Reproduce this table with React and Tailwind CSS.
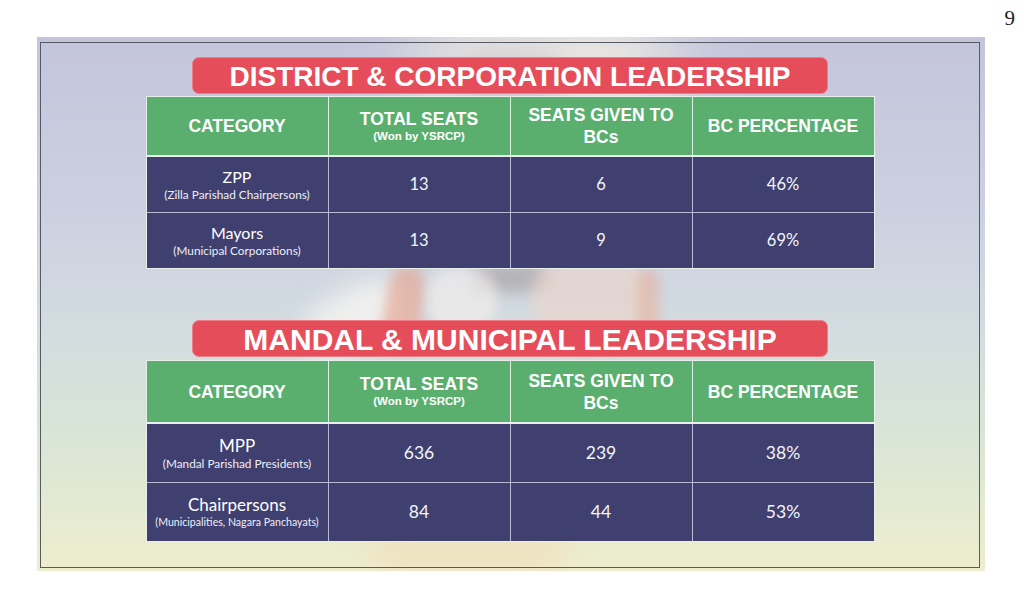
// Slide 9: BC leadership tables

const font = { fontFamily: '"Liberation Sans", Arial, sans-serif' };
const bodyFont = { fontFamily: 'Lato, "Open Sans", sans-serif' };

const headers = [
  { title: "CATEGORY" },
  { title: "TOTAL SEATS", sub: "(Won by YSRCP)" },
  { title: "SEATS GIVEN TO BCs", wrap: true },
  { title: "BC PERCENTAGE" },
];

const district = [
  { name: "ZPP", note: "(Zilla Parishad Chairpersons)", total: "13", bc: "6", pct: "46%" },
  { name: "Mayors", note: "(Municipal Corporations)", total: "13", bc: "9", pct: "69%" },
];

const mandal = [
  { name: "MPP", note: "(Mandal Parishad Presidents)", total: "636", bc: "239", pct: "38%" },
  {
    name: "Chairpersons",
    note: "(Municipalities, Nagara Panchayats)",
    small: true,
    total: "84",
    bc: "44",
    pct: "53%",
  },
];

const Banner = ({ children, className, size }) => (
  <div
    className={`w-[636px] h-[37px] rounded-[7px] bg-[#e54d5b] border border-[#f07c86] flex items-center justify-center ${className}`}
  >
    <span className={`text-white font-bold ${size} leading-none pt-[2px]`} style={font}>
      {children}
    </span>
  </div>
);

const DataTable = ({ rows, headH, rowH, big }) => (
  <div className="w-[729px] bg-[#e9f0ec] p-px flex flex-col gap-[2px]">
    <div className="grid grid-cols-4 gap-px bg-[#dcefe0]">
      {headers.map((h) => (
        <div
          key={h.title}
          className={`bg-[#5aaf6e] ${headH} flex flex-col items-center justify-center text-white font-bold text-center`}
          style={font}
        >
          {h.wrap ? (
            <span className="text-[17.5px] leading-[22px]">
              SEATS GIVEN TO
              <br />
              BCs
            </span>
          ) : (
            <span className="text-[17.5px] leading-[20px]">{h.title}</span>
          )}
          {h.sub && <span className="text-[11.5px] leading-[15px]">{h.sub}</span>}
        </div>
      ))}
    </div>
    <div className="grid grid-cols-4 gap-px bg-[#b9bad3]">
      {rows.map((r) => (
        <div key={r.name} className="contents">
          <div
            className={`bg-[#3f406f] ${rowH} flex flex-col items-center justify-center text-white`}
            style={bodyFont}
          >
            <span className={`${big ? "text-[17px]" : "text-[16px]"} leading-[20px]`}>
              {r.name}
            </span>
            <span
              className={`${r.small ? "text-[10.6px]" : "text-[11.8px]"} leading-[15px] text-[#eeeef6]`}
            >
              {r.note}
            </span>
          </div>
          {[r.total, r.bc, r.pct].map((v, i) => (
            <div
              key={i}
              className={`bg-[#3f406f] ${rowH} flex items-center justify-center text-[#f4f4fa] ${
                big ? "text-[17.5px]" : "text-[16.5px]"
              }`}
              style={bodyFont}
            >
              {v}
            </div>
          ))}
        </div>
      ))}
    </div>
  </div>
);

const App = () => {
  return (
    <div className="w-[1024px] h-[612px] bg-white overflow-hidden">
      {/* Page number */}
      <div className="h-[37px] flex justify-end pr-[9px] pt-[3px]">
        <span className="text-[21px] text-[#222]" style={{ fontFamily: '"Liberation Serif", serif' }}>
          9
        </span>
      </div>

      {/* Slide */}
      <div className="ml-[37px] w-[948px] h-[534px] pt-[5px] pl-[3px] pr-[5px] pb-[3px] relative overflow-hidden bg-[linear-gradient(180deg,#c4c5dc_0%,#cbcfe0_30%,#d3dce0_55%,#d9e5d6_75%,#eeeece_100%)]">
        {/* faded photo backdrop */}
        <div className="absolute left-[380px] top-[-30px] w-[260px] h-[120px] rounded-full bg-[#fffbe6] opacity-70 blur-2xl" />
        <div className="absolute left-[420px] top-[15px] w-[110px] h-[60px] rounded-full bg-[#a9a4b4] opacity-40 blur-lg" />
        <div className="absolute left-[262px] top-[252px] w-[110px] h-[60px] rounded-[40%] bg-[#fbf8f4] opacity-70 blur-md rotate-[-30deg]" />
        <div className="absolute left-[348px] top-[228px] w-[38px] h-[85px] rounded-[40%] bg-[#e8a08a] opacity-60 blur-[6px] rotate-[8deg]" />
        <div className="absolute left-[435px] top-[226px] w-[80px] h-[30px] rounded-full bg-[#8f807e] opacity-40 blur-[7px]" />
        <div className="absolute left-[390px] top-[232px] w-[70px] h-[60px] rounded-[40%] bg-[#f7f1ee] opacity-60 blur-[6px]" />
        <div className="absolute left-[495px] top-[210px] w-[115px] h-[105px] rounded-[45%] bg-[#ead6cd] opacity-70 blur-[7px] rotate-[-15deg]" />
        <div className="absolute left-[600px] top-[232px] w-[22px] h-[75px] rounded-full bg-[#e9a98f] opacity-50 blur-[6px]" />
        <div className="absolute left-[330px] top-[495px] w-[200px] h-[40px] rounded-full bg-[#f3d9b5] opacity-60 blur-lg" />

        <div className="relative w-full h-full border border-[#555a63] flex flex-col items-center pt-[14px]">
          <Banner size="text-[28px]">DISTRICT &amp; CORPORATION LEADERSHIP</Banner>
          <div className="mt-[2px]">
            <DataTable rows={district} headH="h-[58px]" rowH="h-[55px]" />
          </div>

          <Banner className="mt-[51px]" size="text-[30px]">
            MANDAL &amp; MUNICIPAL LEADERSHIP
          </Banner>
          <div className="mt-[3px]">
            <DataTable rows={mandal} headH="h-[61px]" rowH="h-[58px]" big />
          </div>
        </div>
      </div>
    </div>
  );
};

export default App;
